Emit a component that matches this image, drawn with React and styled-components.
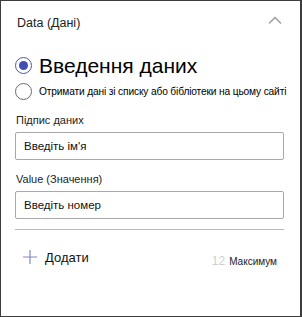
import React from 'react';
import styled, { createGlobalStyle } from 'styled-components';

const GlobalStyle = createGlobalStyle`
  html, body {
    margin: 0;
    padding: 0;
    background: #fff;
  }
  body {
    font-family: "Segoe UI", "Liberation Sans", Arial, sans-serif;
  }
`;

const Panel = styled.div`
  box-sizing: border-box;
  width: 302px;
  height: 317px;
  border: 1px solid #3c3c3c;
  border-right-width: 2px;
  padding: 0 16px 0 14px;
  display: flex;
  flex-direction: column;
`;

const Header = styled.div`
  display: flex;
  align-items: center;
  justify-content: space-between;
  height: 44px;
  padding-left: 2px;
`;

const Title = styled.span`
  font-size: 12.5px;
  color: #222;
`;

const Chevron = styled.svg`
  width: 14px;
  height: 8px;
  margin-right: 2px;
  margin-top: -6px;
`;

const RadioRow = styled.label`
  display: flex;
  align-items: center;
  gap: 7px;
  margin-top: ${(p) => p.$top || 0}px;
`;

const RadioCircle = styled.span`
  box-sizing: border-box;
  width: 17px;
  height: 17px;
  border-radius: 50%;
  border: 1px solid ${(p) => (p.$checked ? '#4a57b5' : '#6b6b6b')};
  display: flex;
  align-items: center;
  justify-content: center;
  flex-shrink: 0;
  &::after {
    content: '';
    display: ${(p) => (p.$checked ? 'block' : 'none')};
    width: 9px;
    height: 9px;
    border-radius: 50%;
    background: #3f4fb3;
  }
`;

const RadioText = styled.span`
  color: #000;
  font-size: ${(p) => p.$size}px;
  line-height: 1.1;
  white-space: nowrap;
  letter-spacing: ${(p) => p.$spacing || 0}px;
`;

const FieldLabel = styled.div`
  font-size: 11px;
  color: #222;
  margin-top: ${(p) => p.$top}px;
  margin-left: 1px;
`;

const Input = styled.div`
  box-sizing: border-box;
  height: 28px;
  margin-top: 6px;
  border: 1px solid #a8a8a8;
  border-radius: 2px;
  padding: 0 8px;
  display: flex;
  align-items: center;
  font-size: 11.5px;
  color: #111;
`;

const Divider = styled.hr`
  border: none;
  border-top: 1px solid #b9b9b9;
  margin: 10px 0 0;
`;

const Footer = styled.div`
  display: flex;
  align-items: center;
  justify-content: space-between;
  margin-top: 16px;
  padding-left: 8px;
`;

const AddButton = styled.div`
  display: flex;
  align-items: center;
  gap: 8px;
  font-size: 13px;
  color: #111;
`;

const Limit = styled.div`
  display: flex;
  align-items: baseline;
  gap: 4px;
  margin-top: 8px;
  margin-right: 7px;
`;

const LimitNumber = styled.span`
  font-size: 12px;
  color: #cfcfcf;
`;

const LimitText = styled.span`
  font-size: 10px;
  color: #222;
`;

export default function App() {
  return (
    <>
      <GlobalStyle />
      <Panel>
        <Header>
          <Title>Data (Дані)</Title>
          <Chevron viewBox="0 0 14 8">
            <path d="M1 7.5 L7 1.5 L13 7.5" fill="none" stroke="#9a9a9a" strokeWidth="1.3" />
          </Chevron>
        </Header>
        <RadioRow $top={9}>
          <RadioCircle $checked />
          <RadioText $size={21}>Введення даних</RadioText>
        </RadioRow>
        <RadioRow $top={6}>
          <RadioCircle />
          <RadioText $size={10.2} $spacing={-0.15}>
            Отримати дані зі списку або бібліотеки на цьому сайті
          </RadioText>
        </RadioRow>
        <FieldLabel $top={14}>Підпис даних</FieldLabel>
        <Input>Введіть ім'я</Input>
        <FieldLabel $top={13}>Value (Значення)</FieldLabel>
        <Input>Введіть номер</Input>
        <Divider />
        <Footer>
          <AddButton>
            <svg width="14" height="14" viewBox="0 0 14 14">
              <path d="M7 0 V14 M0 7 H14" stroke="#8088c4" strokeWidth="1.2" />
            </svg>
            Додати
          </AddButton>
          <Limit>
            <LimitNumber>12</LimitNumber>
            <LimitText>Максимум</LimitText>
          </Limit>
        </Footer>
      </Panel>
    </>
  );
}
